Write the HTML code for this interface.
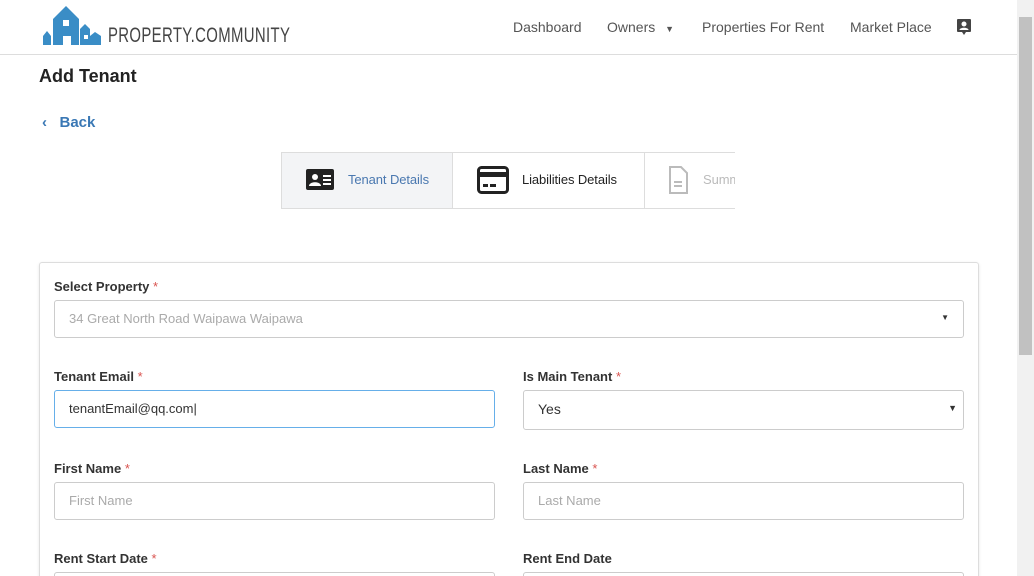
<!DOCTYPE html>
<html><head><style>
*{box-sizing:border-box;margin:0;padding:0}
html,body{width:1034px;height:576px;overflow:hidden}
body{background:#fff;font-family:"Liberation Sans",sans-serif;color:#333}
#w{position:relative;width:1034px;height:576px;overflow:hidden}
.hdr{position:absolute;left:0;top:0;width:1017px;height:55px;border-bottom:1px solid #ddd}
.nav{position:absolute;top:19px;font-size:14px;color:#555}
.sb{position:absolute;right:0;top:0;width:17px;height:576px;background:#f1f1f1}
.sb .t{position:absolute;left:2px;top:17px;width:13px;height:338px;background:#c1c1c1}
.lbl{position:absolute;font-size:13px;font-weight:bold;color:#333}
.lbl span{color:#d9534f;font-weight:normal}
.inp{position:absolute;height:38px;border:1px solid #ccc;border-radius:3px;font-size:13px;color:#aaa;padding:10px 14px}
.st{position:absolute;top:19px;font-size:13px;letter-spacing:-.1px;white-space:nowrap}
</style></head><body><div id="w">
<div class="hdr">
<svg style="position:absolute;left:43px;top:5px" width="58" height="40" viewBox="0 0 58 40"><g fill="#3a8dc6"><path d="M0 40V31l4-5 4 5v9z"/><path d="M10 40V14L23 1l13 13v26H28V31h-8v9z"/><path d="M37 40V24l5-5 5 5v16z"/><path d="M47 40V31l5-4 6 4v9z"/></g><rect x="20" y="15" width="6" height="6" fill="#fff"/><rect x="41" y="30" width="4" height="4" fill="#fff"/></svg>
<div style="position:absolute;left:108px;top:24px;font-size:21px;letter-spacing:.5px;color:#444;transform:scaleX(.71);transform-origin:left;white-space:nowrap">PROPERTY.COMMUNITY</div>
<div class="nav" style="left:513px">Dashboard</div>
<div class="nav" style="left:607px">Owners <span style="font-size:9px;margin-left:6px">▼</span></div>
<div class="nav" style="left:702px">Properties For Rent</div>
<div class="nav" style="left:850px">Market Place</div>
<svg style="position:absolute;left:957px;top:19px" width="14" height="16" viewBox="0 0 14 16"><path d="M1 0h12a1 1 0 011 1v11a1 1 0 01-1 1H9l-2 3-2-3H1a1 1 0 01-1-1V1a1 1 0 011-1z" fill="#444"/><circle cx="7" cy="5" r="2.5" fill="#fff"/><path d="M2.5 11c0-3 9-3 9 0z" fill="#fff"/></svg>
</div>
<div class="sb"><div class="t"></div></div>
<div style="position:absolute;left:39px;top:66px;font-size:18px;font-weight:bold;color:#222">Add Tenant</div>
<div style="position:absolute;left:42px;top:114px;font-size:15px;font-weight:bold;color:#3a78b5">‹&nbsp;&nbsp; Back</div>
<div style="position:absolute;left:281px;top:152px;width:454px;height:57px;border:1px solid #ddd;border-right:none;background:#fff;overflow:hidden">
<div style="position:absolute;left:0;top:0;width:171px;height:55px;background:#f3f4f6;border-right:1px solid #ddd"></div>
<div style="position:absolute;left:362px;top:0;width:0;height:55px;border-right:1px solid #ddd"></div>
<svg style="position:absolute;left:24px;top:16px" width="28" height="21"><rect width="28" height="21" rx="2" fill="#222"/><circle cx="9" cy="8" r="3" fill="#fff"/><path d="M3 17c0-5 12-5 12 0z" fill="#fff"/><rect x="17" y="6" width="8" height="2" fill="#fff"/><rect x="17" y="10" width="8" height="2" fill="#fff"/><rect x="17" y="14" width="8" height="2" fill="#fff"/></svg>
<div class="st" style="left:66px;color:#4a78b0">Tenant Details</div>
<svg style="position:absolute;left:195px;top:13px" width="32" height="28"><rect x="1.5" y="1.5" width="29" height="25" rx="3" fill="none" stroke="#222" stroke-width="3"/><rect x="1.5" y="6" width="29" height="5" fill="#222"/><rect x="6" y="18" width="5" height="3" fill="#222"/><rect x="13" y="18" width="6" height="3" fill="#222"/></svg>
<div class="st" style="left:240px;color:#222">Liabilities Details</div>
<svg style="position:absolute;left:386px;top:13px" width="20" height="28"><path d="M2 1h11l6 6v20H2z" fill="none" stroke="#bbb" stroke-width="2"/><path d="M6 16h8M6 20h8" stroke="#bbb" stroke-width="2"/></svg>
<div class="st" style="left:421px;color:#bbb">Summary</div>
</div>
<div style="position:absolute;left:39px;top:262px;width:940px;height:330px;border:1px solid #ddd;border-radius:3px;box-shadow:0 1px 3px rgba(0,0,0,.1)"></div>
<div class="lbl" style="left:54px;top:279px">Select Property <span>*</span></div>
<div class="inp" style="left:54px;top:300px;width:910px">34 Great North Road Waipawa Waipawa<span style="position:absolute;right:14px;top:12px;font-size:8px;color:#333">▼</span></div>
<div class="lbl" style="left:54px;top:369px">Tenant Email <span>*</span></div>
<div class="inp" style="left:54px;top:390px;width:441px;border-color:#66afe9;color:#333;font-size:13px">tenantEmail@qq.com|</div>
<div class="lbl" style="left:523px;top:369px">Is Main Tenant <span>*</span></div>
<div class="inp" style="left:523px;top:390px;width:441px;height:40px;color:#333;font-size:14px">Yes<span style="position:absolute;right:6px;top:12px;font-size:9px">▼</span></div>
<div class="lbl" style="left:54px;top:461px">First Name <span>*</span></div>
<div class="inp" style="left:54px;top:482px;width:441px">First Name</div>
<div class="lbl" style="left:523px;top:461px">Last Name <span>*</span></div>
<div class="inp" style="left:523px;top:482px;width:441px">Last Name</div>
<div class="lbl" style="left:54px;top:551px">Rent Start Date <span>*</span></div>
<div class="lbl" style="left:523px;top:551px">Rent End Date</div>
<div class="inp" style="left:54px;top:572px;width:441px"></div>
<div class="inp" style="left:523px;top:572px;width:441px"></div>
</div></body></html>
